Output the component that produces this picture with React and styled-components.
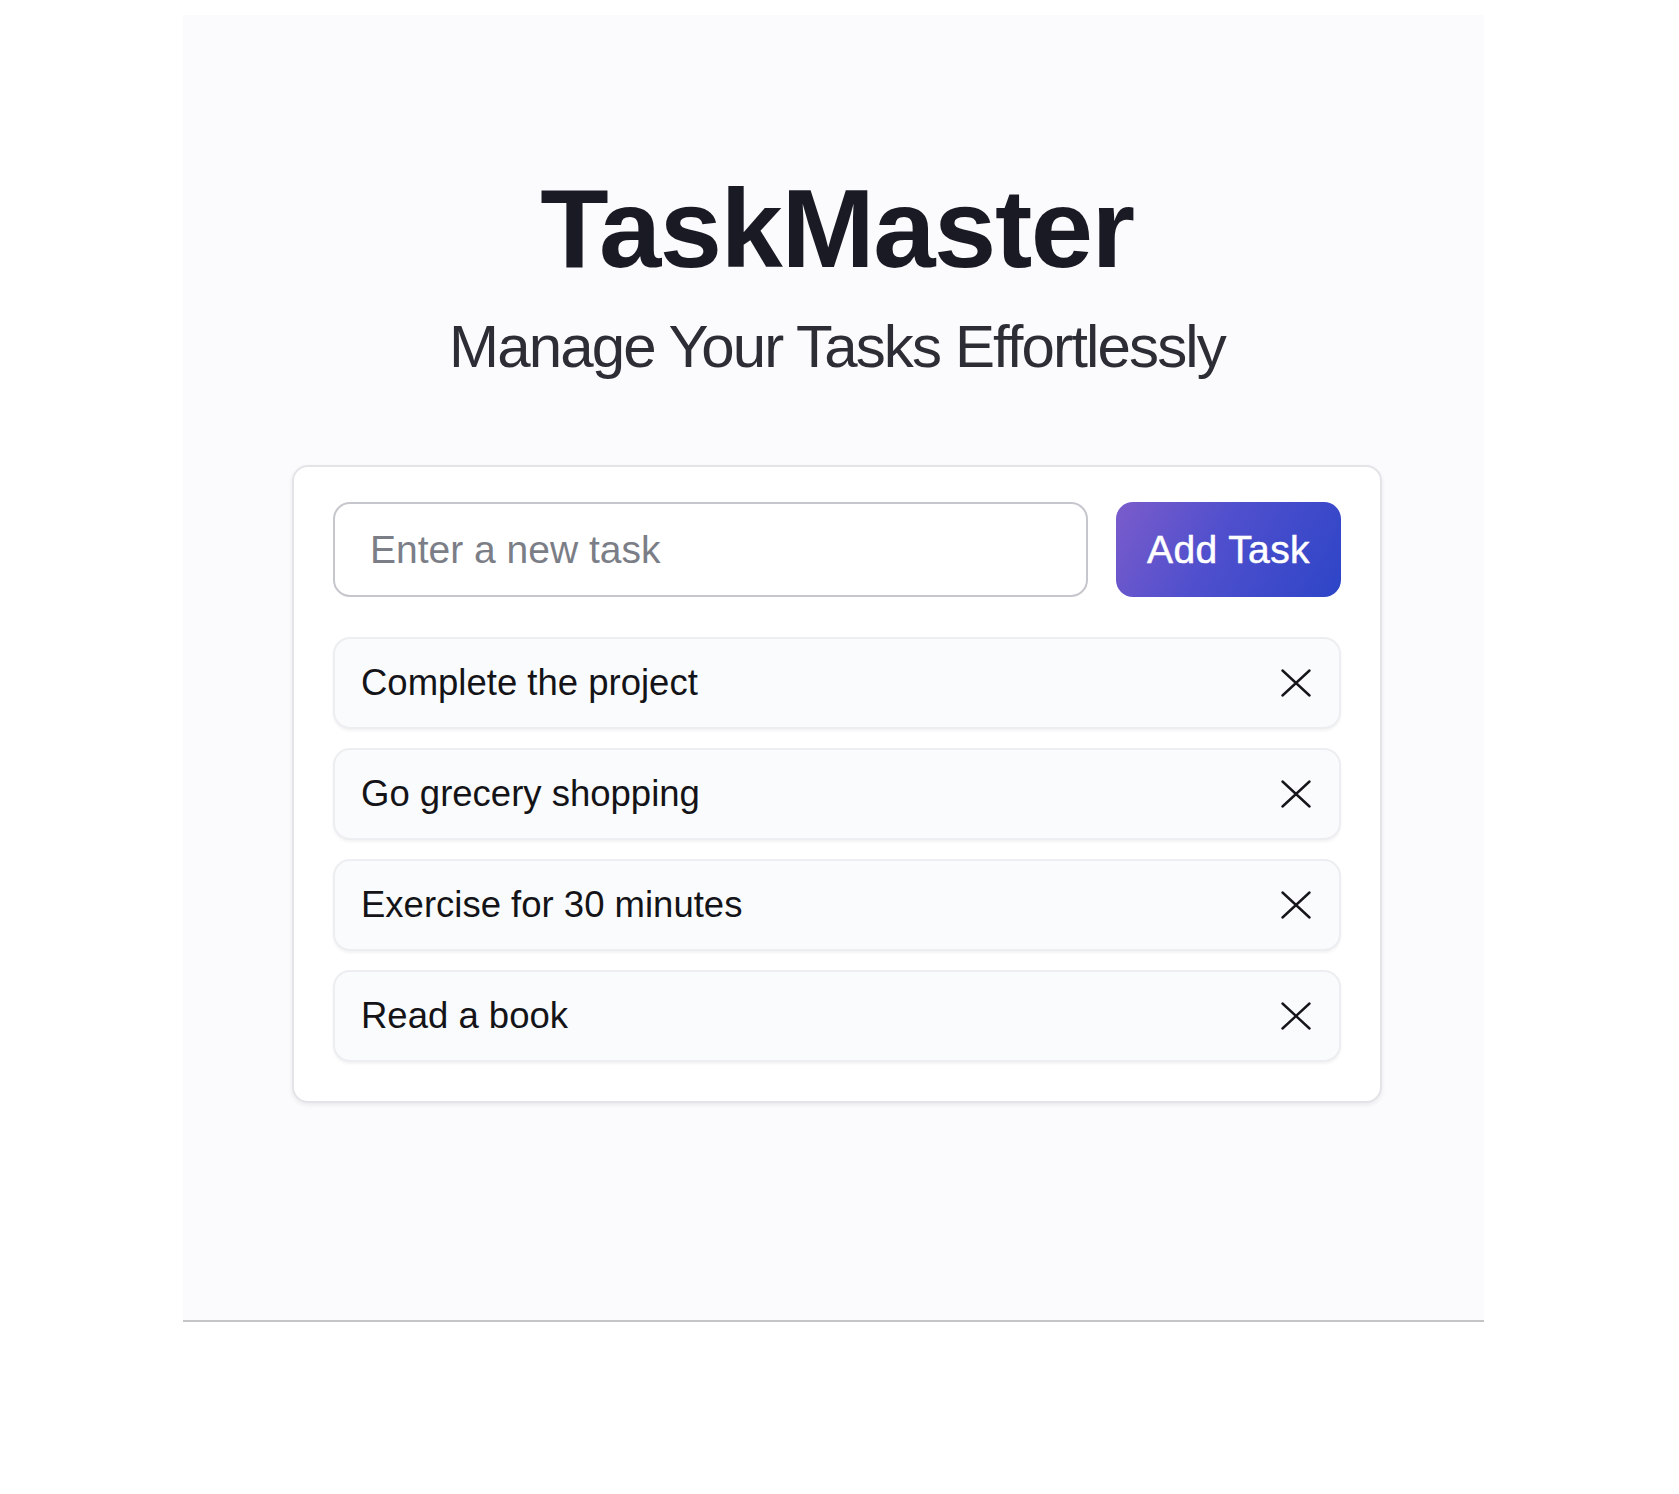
import React from 'react';
import styled, { createGlobalStyle } from 'styled-components';

const GlobalStyle = createGlobalStyle`
  html, body {
    margin: 0;
    padding: 0;
    background: #ffffff;
  }
  body {
    font-family: "Liberation Sans", Arial, sans-serif;
  }
  * {
    box-sizing: border-box;
  }
`;

const Page = styled.div`
  padding-top: 15px;
  min-height: 1494px;
`;

const Panel = styled.main`
  width: 1301px;
  margin-left: 183px;
  min-height: 1307px;
  background: #fbfbfd;
  border-bottom: 2px solid #c4c4c6;
  display: flex;
  flex-direction: column;
  align-items: center;
  padding: 158px 0 0 7px;
`;

const Title = styled.h1`
  margin: 0;
  font-size: 112px;
  line-height: 112px;
  font-weight: 700;
  letter-spacing: -0.013em;
  color: #191a23;
`;

const Subtitle = styled.p`
  margin: 32px 0 0;
  font-size: 60px;
  line-height: 60px;
  font-weight: 400;
  letter-spacing: -0.031em;
  color: #2c2d35;
`;

const Card = styled.section`
  margin-top: 88px;
  width: 1090px;
  padding: 35px 39px 39px;
  background: #ffffff;
  border: 2px solid #e3e4e8;
  border-radius: 16px;
  box-shadow: 0 2px 5px rgba(20, 20, 40, 0.07);
  display: flex;
  flex-direction: column;
  gap: 40px;
`;

const InputRow = styled.form`
  display: flex;
  gap: 28px;
  height: 95px;
`;

const TaskInput = styled.input`
  flex: 1;
  height: 100%;
  padding: 0 35px;
  border: 2px solid #c5c7cd;
  border-radius: 17px;
  background: #ffffff;
  font-family: inherit;
  font-size: 39px;
  color: #1a1a1a;
  outline: none;

  &::placeholder {
    color: #7b7e87;
  }
`;

const AddButton = styled.button`
  width: 225px;
  height: 100%;
  border: none;
  border-radius: 17px;
  background: linear-gradient(120deg, #7b5ccb 0%, #4f4fcd 45%, #2d45c7 100%);
  color: #ffffff;
  font-family: inherit;
  font-size: 39px;
  font-weight: 400;
  letter-spacing: 0.01em;
  -webkit-text-stroke: 0.5px #ffffff;
  cursor: pointer;
`;

const TaskList = styled.ul`
  list-style: none;
  margin: 0;
  padding: 0;
  display: flex;
  flex-direction: column;
  gap: 19px;
`;

const TaskItem = styled.li`
  height: 92px;
  display: flex;
  align-items: center;
  justify-content: space-between;
  padding: 0 28px 0 26px;
  background: #fafbfd;
  border: 2px solid #eceef1;
  border-radius: 17px;
  box-shadow: 0 2px 3px rgba(20, 20, 40, 0.05);
  font-size: 36.5px;
  color: #141418;
`;

const RemoveButton = styled.button`
  display: flex;
  align-items: center;
  justify-content: center;
  padding: 0;
  border: none;
  background: none;
  color: #16161a;
  cursor: pointer;
`;

const CloseIcon = () => (
  <svg width="30" height="28" viewBox="0 0 30 28" fill="none">
    <path d="M1.5 1.5 L28.5 26.5 M28.5 1.5 L1.5 26.5" stroke="currentColor" strokeWidth="2.4" strokeLinecap="round" />
  </svg>
);

const tasks = [
  'Complete the project',
  'Go grecery shopping',
  'Exercise for 30 minutes',
  'Read a book',
];

export default function App() {
  return (
    <Page>
      <GlobalStyle />
      <Panel>
        <Title>TaskMaster</Title>
        <Subtitle>Manage Your Tasks Effortlessly</Subtitle>
        <Card>
          <InputRow onSubmit={(e) => e.preventDefault()}>
            <TaskInput placeholder="Enter a new task" />
            <AddButton type="submit">Add Task</AddButton>
          </InputRow>
          <TaskList>
            {tasks.map((task) => (
              <TaskItem key={task}>
                <span>{task}</span>
                <RemoveButton aria-label="Remove task">
                  <CloseIcon />
                </RemoveButton>
              </TaskItem>
            ))}
          </TaskList>
        </Card>
      </Panel>
    </Page>
  );
}
